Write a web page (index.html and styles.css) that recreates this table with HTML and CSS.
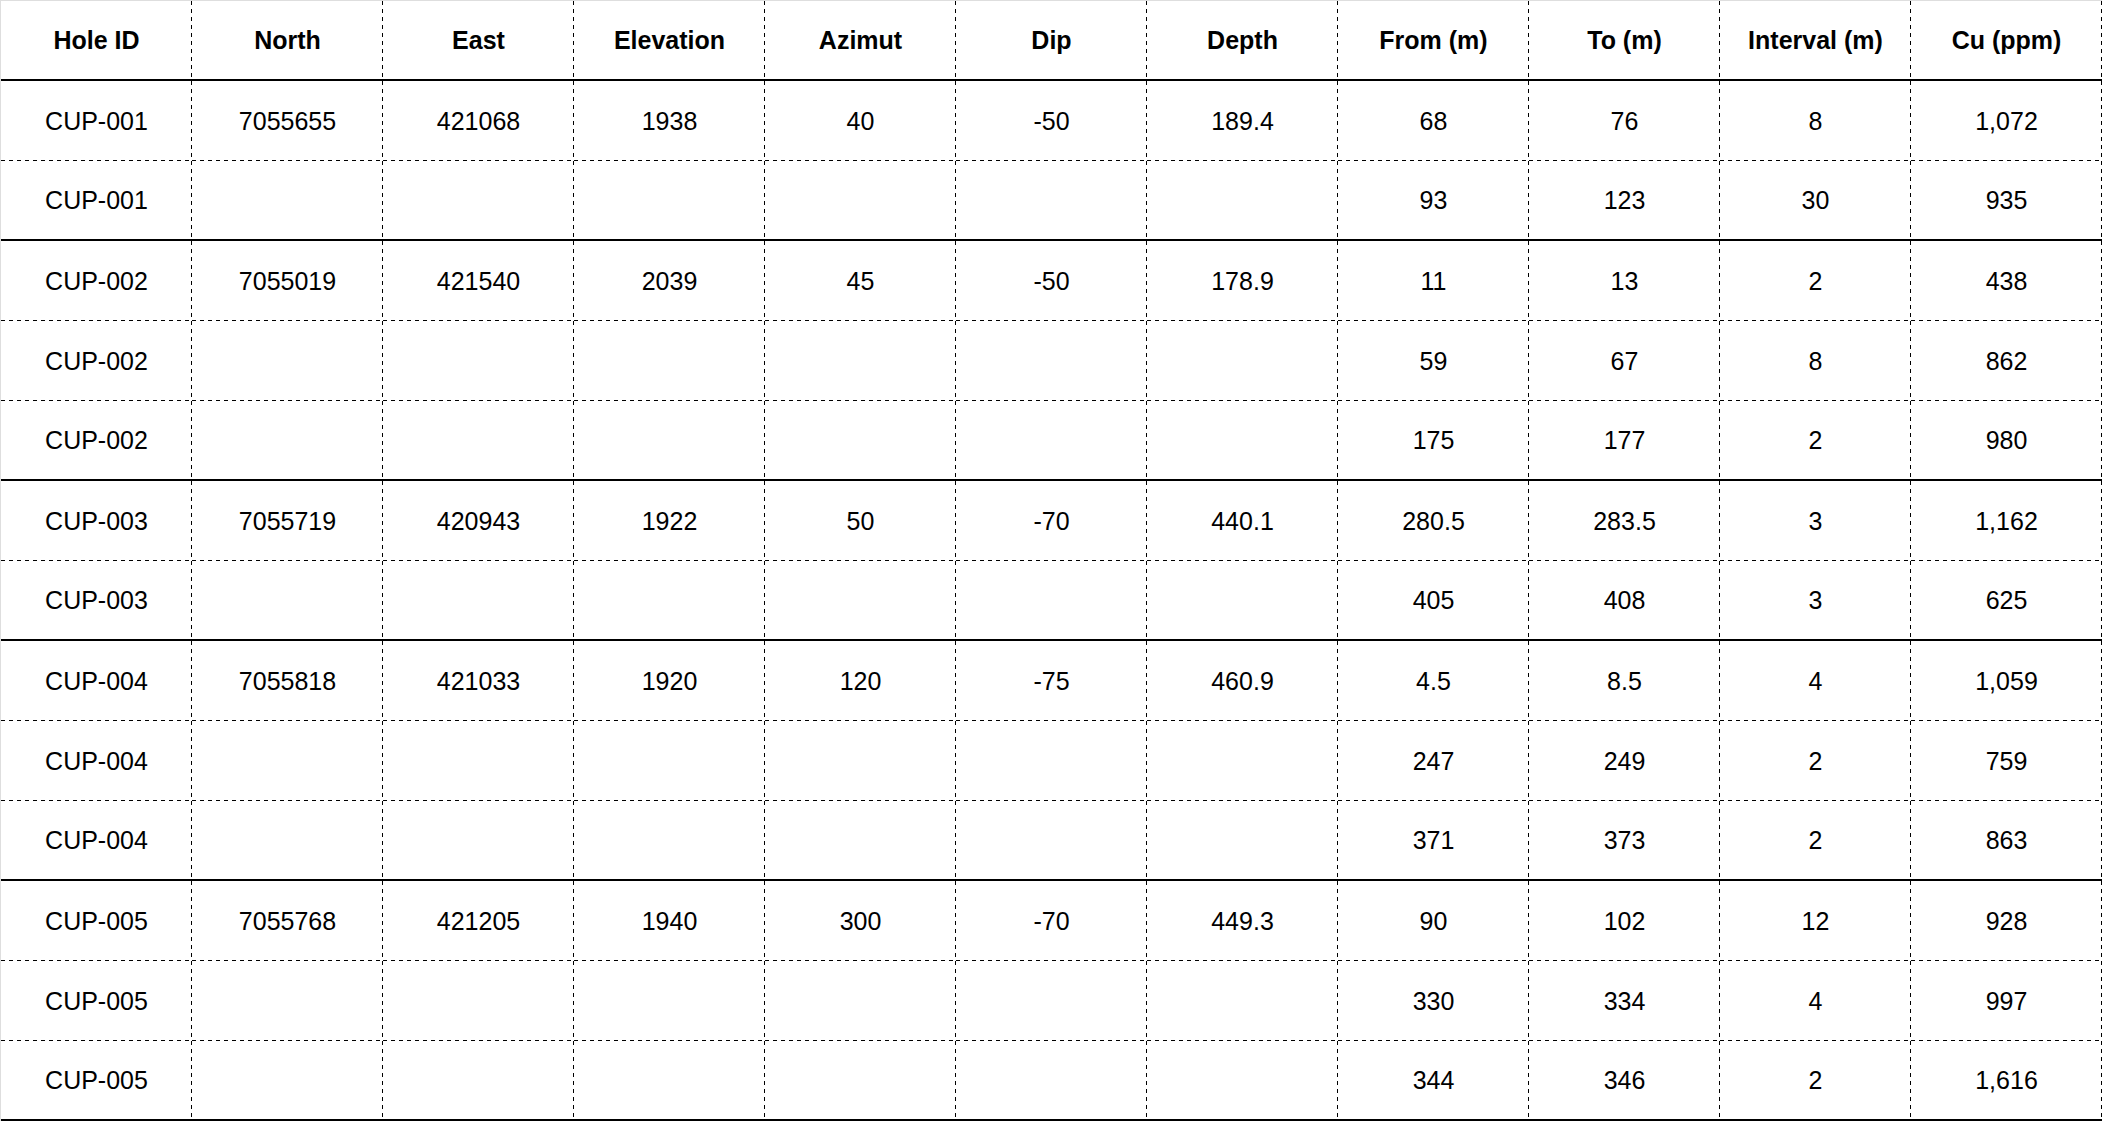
FILE: index.html
```html
<!DOCTYPE html>
<html>
<head>
<meta charset="utf-8">
<link rel="stylesheet" href="styles.css">
</head>
<body>
<table class="grid">
<colgroup>
<col><col><col><col><col><col><col><col><col><col><col>
</colgroup>
<thead>
<tr class="end"><th>Hole ID</th><th>North</th><th>East</th><th>Elevation</th><th>Azimut</th><th>Dip</th><th>Depth</th><th>From (m)</th><th>To (m)</th><th>Interval (m)</th><th>Cu (ppm)</th></tr>
</thead>
<tbody>
<tr><td>CUP-001</td><td>7055655</td><td>421068</td><td>1938</td><td>40</td><td>-50</td><td>189.4</td><td>68</td><td>76</td><td>8</td><td>1,072</td></tr>
<tr class="end"><td>CUP-001</td><td></td><td></td><td></td><td></td><td></td><td></td><td>93</td><td>123</td><td>30</td><td>935</td></tr>
<tr><td>CUP-002</td><td>7055019</td><td>421540</td><td>2039</td><td>45</td><td>-50</td><td>178.9</td><td>11</td><td>13</td><td>2</td><td>438</td></tr>
<tr><td>CUP-002</td><td></td><td></td><td></td><td></td><td></td><td></td><td>59</td><td>67</td><td>8</td><td>862</td></tr>
<tr class="end"><td>CUP-002</td><td></td><td></td><td></td><td></td><td></td><td></td><td>175</td><td>177</td><td>2</td><td>980</td></tr>
<tr><td>CUP-003</td><td>7055719</td><td>420943</td><td>1922</td><td>50</td><td>-70</td><td>440.1</td><td>280.5</td><td>283.5</td><td>3</td><td>1,162</td></tr>
<tr class="end"><td>CUP-003</td><td></td><td></td><td></td><td></td><td></td><td></td><td>405</td><td>408</td><td>3</td><td>625</td></tr>
<tr><td>CUP-004</td><td>7055818</td><td>421033</td><td>1920</td><td>120</td><td>-75</td><td>460.9</td><td>4.5</td><td>8.5</td><td>4</td><td>1,059</td></tr>
<tr><td>CUP-004</td><td></td><td></td><td></td><td></td><td></td><td></td><td>247</td><td>249</td><td>2</td><td>759</td></tr>
<tr class="end"><td>CUP-004</td><td></td><td></td><td></td><td></td><td></td><td></td><td>371</td><td>373</td><td>2</td><td>863</td></tr>
<tr><td>CUP-005</td><td>7055768</td><td>421205</td><td>1940</td><td>300</td><td>-70</td><td>449.3</td><td>90</td><td>102</td><td>12</td><td>928</td></tr>
<tr><td>CUP-005</td><td></td><td></td><td></td><td></td><td></td><td></td><td>330</td><td>334</td><td>4</td><td>997</td></tr>
<tr class="end"><td>CUP-005</td><td></td><td></td><td></td><td></td><td></td><td></td><td>344</td><td>346</td><td>2</td><td>1,616</td></tr>
</tbody>
</table>
</body>
</html>
```
FILE: styles.css
```css
html, body {
  margin: 0;
  padding: 0;
  background: #ffffff;
}
.grid {
  width: 2102px;
  table-layout: fixed;
  border-collapse: separate;
  border-spacing: 0;
  font-family: "Liberation Sans", Arial, sans-serif;
  font-size: 25px;
  color: #000000;
  border-top: 1px solid #dedede;
  border-left: 1px solid #dedede;
}
.grid th,
.grid td {
  box-sizing: border-box;
  height: 80px;
  padding: 0;
  text-align: center;
  vertical-align: middle;
  font-weight: normal;
  background:
    linear-gradient(to bottom, #000000 50%, transparent 50%) right top / 1px 8px repeat-y,
    linear-gradient(to right, #000000 50%, transparent 50%) left bottom / 8px 1px repeat-x;
}
.grid th {
  font-weight: bold;
}
.grid tr.end th,
.grid tr.end td {
  border-bottom: 2px solid #000000;
  background:
    linear-gradient(to bottom, #000000 50%, transparent 50%) right top / 1px 8px repeat-y;
}
```
